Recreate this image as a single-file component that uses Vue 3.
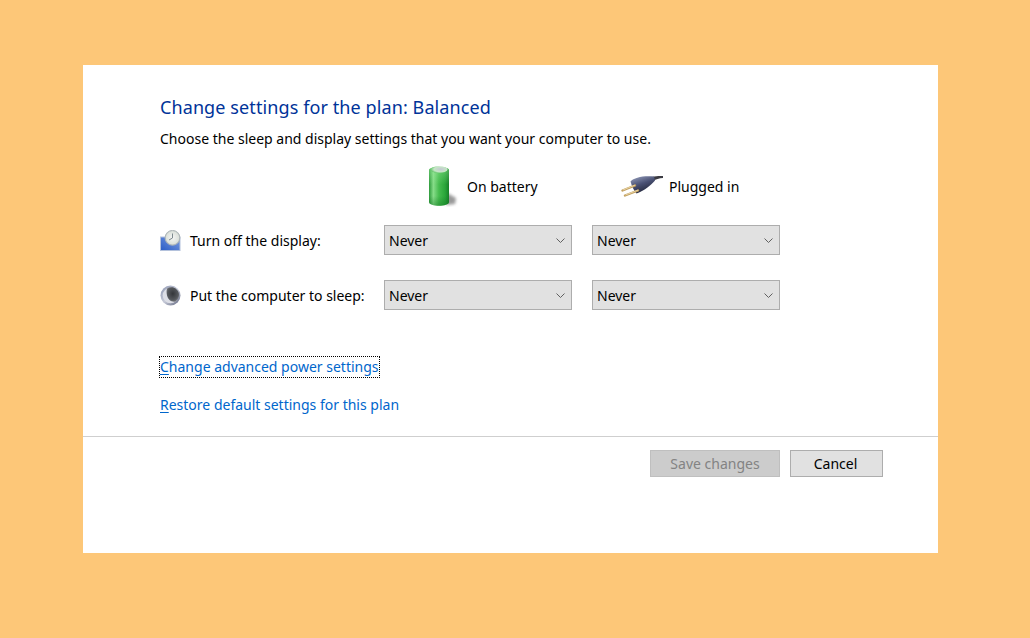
<script setup>
const rows = [
  { id: 'display', label: 'Turn off the display:' },
  { id: 'sleep', label: 'Put the computer to sleep:' }
]
</script>

<template>
  <div class="page">
    <main class="panel">
      <div class="content">
        <h1 class="title">Change settings for the plan: Balanced</h1>
        <p class="desc">Choose the sleep and display settings that you want your computer to use.</p>

        <div class="heads">
          <div class="head head-battery">
            <svg class="ico-battery" width="32" height="42" viewBox="0 0 32 42">
              <defs>
                <linearGradient id="bat" x1="0" x2="1" y1="0" y2="0">
                  <stop offset="0" stop-color="#2c9a3a" />
                  <stop offset="0.22" stop-color="#86dc88" />
                  <stop offset="0.5" stop-color="#45bb4e" />
                  <stop offset="0.8" stop-color="#2aa63a" />
                  <stop offset="1" stop-color="#178028" />
                </linearGradient>
                <linearGradient id="batFade" x1="0" x2="0" y1="0" y2="1">
                  <stop offset="0" stop-color="#9ff0a0" stop-opacity="0.45" />
                  <stop offset="0.45" stop-color="#9ff0a0" stop-opacity="0" />
                  <stop offset="0.75" stop-color="#0a6a1c" stop-opacity="0" />
                  <stop offset="1" stop-color="#0a6a1c" stop-opacity="0.4" />
                </linearGradient>
                <radialGradient id="batTop" cx="0.6" cy="0.45" r="0.6">
                  <stop offset="0" stop-color="#c4c8d2" />
                  <stop offset="0.65" stop-color="#c6e6c6" />
                  <stop offset="1" stop-color="#63c36a" />
                </radialGradient>
                <filter id="soft" x="-30%" y="-30%" width="160%" height="160%">
                  <feGaussianBlur stdDeviation="1.6" />
                </filter>
              </defs>
              <path d="M19 28 L28 33 L27 39 L18 40 Z" fill="#777" opacity="0.75" filter="url(#soft)" />
              <path d="M1 5 C1 1 21 1 21 5 L21 37 C21 42 1 42 1 37 Z" fill="url(#bat)" />
              <path d="M1 5 C1 1 21 1 21 5 L21 37 C21 42 1 42 1 37 Z" fill="url(#batFade)" />
              <ellipse cx="11" cy="4.6" rx="8.6" ry="3.4" fill="url(#batTop)" />
            </svg>
            <span>On battery</span>
          </div>
          <div class="head head-plug">
            <svg class="ico-plug" width="42" height="28" viewBox="0 0 42 28">
              <defs>
                <linearGradient id="plugBody" x1="0.1" x2="0.55" y1="0.1" y2="1">
                  <stop offset="0" stop-color="#8a93b2" />
                  <stop offset="0.45" stop-color="#4a5174" />
                  <stop offset="1" stop-color="#1f2236" />
                </linearGradient>
                <filter id="plugSoft" x="-10%" y="-10%" width="120%" height="120%">
                  <feGaussianBlur stdDeviation="0.35" />
                </filter>
              </defs>
              <g filter="url(#plugSoft)">
                <path d="M31 5 C35 4 38 3.8 42 4 L42 6 C38 6.2 35 7.2 32 9 Z" fill="#3a3b42" />
                <path d="M9.5 9.5 C13 5.5 22 3.5 33 4.5 L34 8.5 C30 13 24 18.5 15.5 21.5 C12.5 18 10.5 13.5 9.5 9.5 Z" fill="url(#plugBody)" />
                <path d="M1.5 18.5 L14 13.5" stroke="#c2a060" stroke-width="2.4" stroke-linecap="round" />
                <path d="M4 23.5 L17 18.5" stroke="#c2a060" stroke-width="2.4" stroke-linecap="round" />
                <path d="M2 18 L14 13.1 M4.5 23 L17 18.1" stroke="#f2e2b8" stroke-width="0.8" />
              </g>
            </svg>
            <span>Plugged in</span>
          </div>
        </div>

        <div class="rows">
          <template v-for="r in rows" :key="r.id">
            <div class="label">
              <svg v-if="r.id === 'display'" class="ico" width="21" height="21" viewBox="0 0 21 21">
                <defs>
                  <linearGradient id="scr" x1="0" x2="1" y1="1" y2="0">
                    <stop offset="0" stop-color="#2a5cc6" />
                    <stop offset="1" stop-color="#7f9fe0" />
                  </linearGradient>
                  <radialGradient id="clk" cx="0.5" cy="0.5" r="0.55">
                    <stop offset="0" stop-color="#f4f5f4" />
                    <stop offset="0.75" stop-color="#dde2dc" />
                    <stop offset="1" stop-color="#a4aeb0" />
                  </radialGradient>
                </defs>
                <rect x="0.5" y="7" width="19.5" height="13.5" fill="url(#scr)" stroke="#b4c2dc" />
                <circle cx="12.5" cy="7.8" r="7.4" fill="url(#clk)" stroke="#aeb6b8" />
                <path d="M12.5 3.5 V8 L9 10" fill="none" stroke="#7d8a8e" stroke-width="1" />
              </svg>
              <svg v-else class="ico" width="21" height="21" viewBox="0 0 21 21">
                <defs>
                  <radialGradient id="moon" cx="0.5" cy="0.45" r="0.6">
                    <stop offset="0" stop-color="#34363a" />
                    <stop offset="0.7" stop-color="#55585d" />
                    <stop offset="1" stop-color="#7d8085" />
                  </radialGradient>
                  <linearGradient id="ring" x1="0" x2="1" y1="0" y2="1">
                    <stop offset="0" stop-color="#8c95b0" />
                    <stop offset="0.5" stop-color="#c6cad8" />
                    <stop offset="1" stop-color="#5a5f78" />
                  </linearGradient>
                </defs>
                <circle cx="10.5" cy="10.5" r="10" fill="url(#ring)" />
                <circle cx="10.5" cy="10.5" r="7.8" fill="#dcdee6" />
                <path d="M7 3.4 A7.8 7.8 0 0 1 15.5 16.5 C11.5 17.5 8 14.5 7 10.5 C6.4 8 6.4 5.6 7 3.4 Z" fill="url(#moon)" />
              </svg>
              <span>{{ r.label }}</span>
            </div>
            <div class="select" v-for="n in 2" :key="n">
              <span>Never</span>
              <svg width="9" height="5" viewBox="0 0 9 5"><path d="M0.5 0.5 L4.5 4.5 L8.5 0.5" fill="none" stroke="#606060" stroke-width="1" /></svg>
            </div>
          </template>
        </div>

        <div class="links">
          <a class="link focused"><u>C</u>hange advanced power settings</a>
          <a class="link"><u>R</u>estore default settings for this plan</a>
        </div>
      </div>

      <footer class="footer">
        <button class="btn save" disabled>Save changes</button>
        <button class="btn cancel">Cancel</button>
      </footer>
    </main>
  </div>
</template>

<style>
html, body { margin: 0; background: #fdc778; }
</style>

<style scoped>
.page {
  width: 1030px;
  height: 638px;
  padding: 65px 92px 85px 83px;
  box-sizing: border-box;
  background: #fdc778;
  font-family: "Noto Sans", "Open Sans", sans-serif;
  font-size: 14px;
  color: #000;
}
.panel {
  height: 488px;
  background: #fff;
  display: flex;
  flex-direction: column;
}
.content {
  height: 371px;
  box-sizing: border-box;
  padding: 28px 0 0 77px;
}
.title {
  margin: 0;
  font-size: 18px;
  line-height: 28px;
  font-weight: 400;
  letter-spacing: 0.1px;
  color: #003399;
}
.desc {
  margin: 8px 0 0;
  line-height: 20px;
}
.heads {
  display: flex;
  height: 42px;
  margin: 16px 0 18px 224px;
}
.head { display: flex; align-items: center; }
.head-battery { width: 208px; box-sizing: border-box; padding-left: 44px; }
.head-plug { padding-left: 29px; }
.ico-battery { margin-right: 7px; flex: none; }
.ico-plug { margin-right: 6px; flex: none; }
.rows {
  display: grid;
  grid-template-columns: 204px 188px 188px;
  grid-auto-rows: 30px;
  column-gap: 20px;
  row-gap: 25px;
}
.rows .label:first-child { margin: 0; }
.label { display: flex; align-items: center; gap: 9px; white-space: nowrap; }
.ico { flex: none; }
.select {
  height: 30px;
  box-sizing: border-box;
  border: 1px solid #adadad;
  background: #e1e1e1;
  display: flex;
  align-items: center;
  justify-content: space-between;
  padding: 0 6px 0 4px;
}
.links {
  margin-top: 47px;
  display: flex;
  flex-direction: column;
  align-items: flex-start;
  gap: 18px;
}
.link { color: #0066cc; line-height: 20px; }
.link u { text-underline-offset: 2px; }
.focused { outline: 1px dotted #000; outline-offset: 0; }
.footer {
  border-top: 1px solid #cfcfcf;
  display: flex;
  justify-content: flex-end;
  gap: 10px;
  padding: 13px 55px 0 0;
}
.btn {
  height: 27px;
  box-sizing: border-box;
  font: inherit;
  padding: 0;
  border: 1px solid #adadad;
}
.save { width: 130px; background: #cccccc; color: #838383; border-color: #bfbfbf; }
.cancel { width: 93px; background: #e1e1e1; color: #000; padding-right: 2px; }
</style>
